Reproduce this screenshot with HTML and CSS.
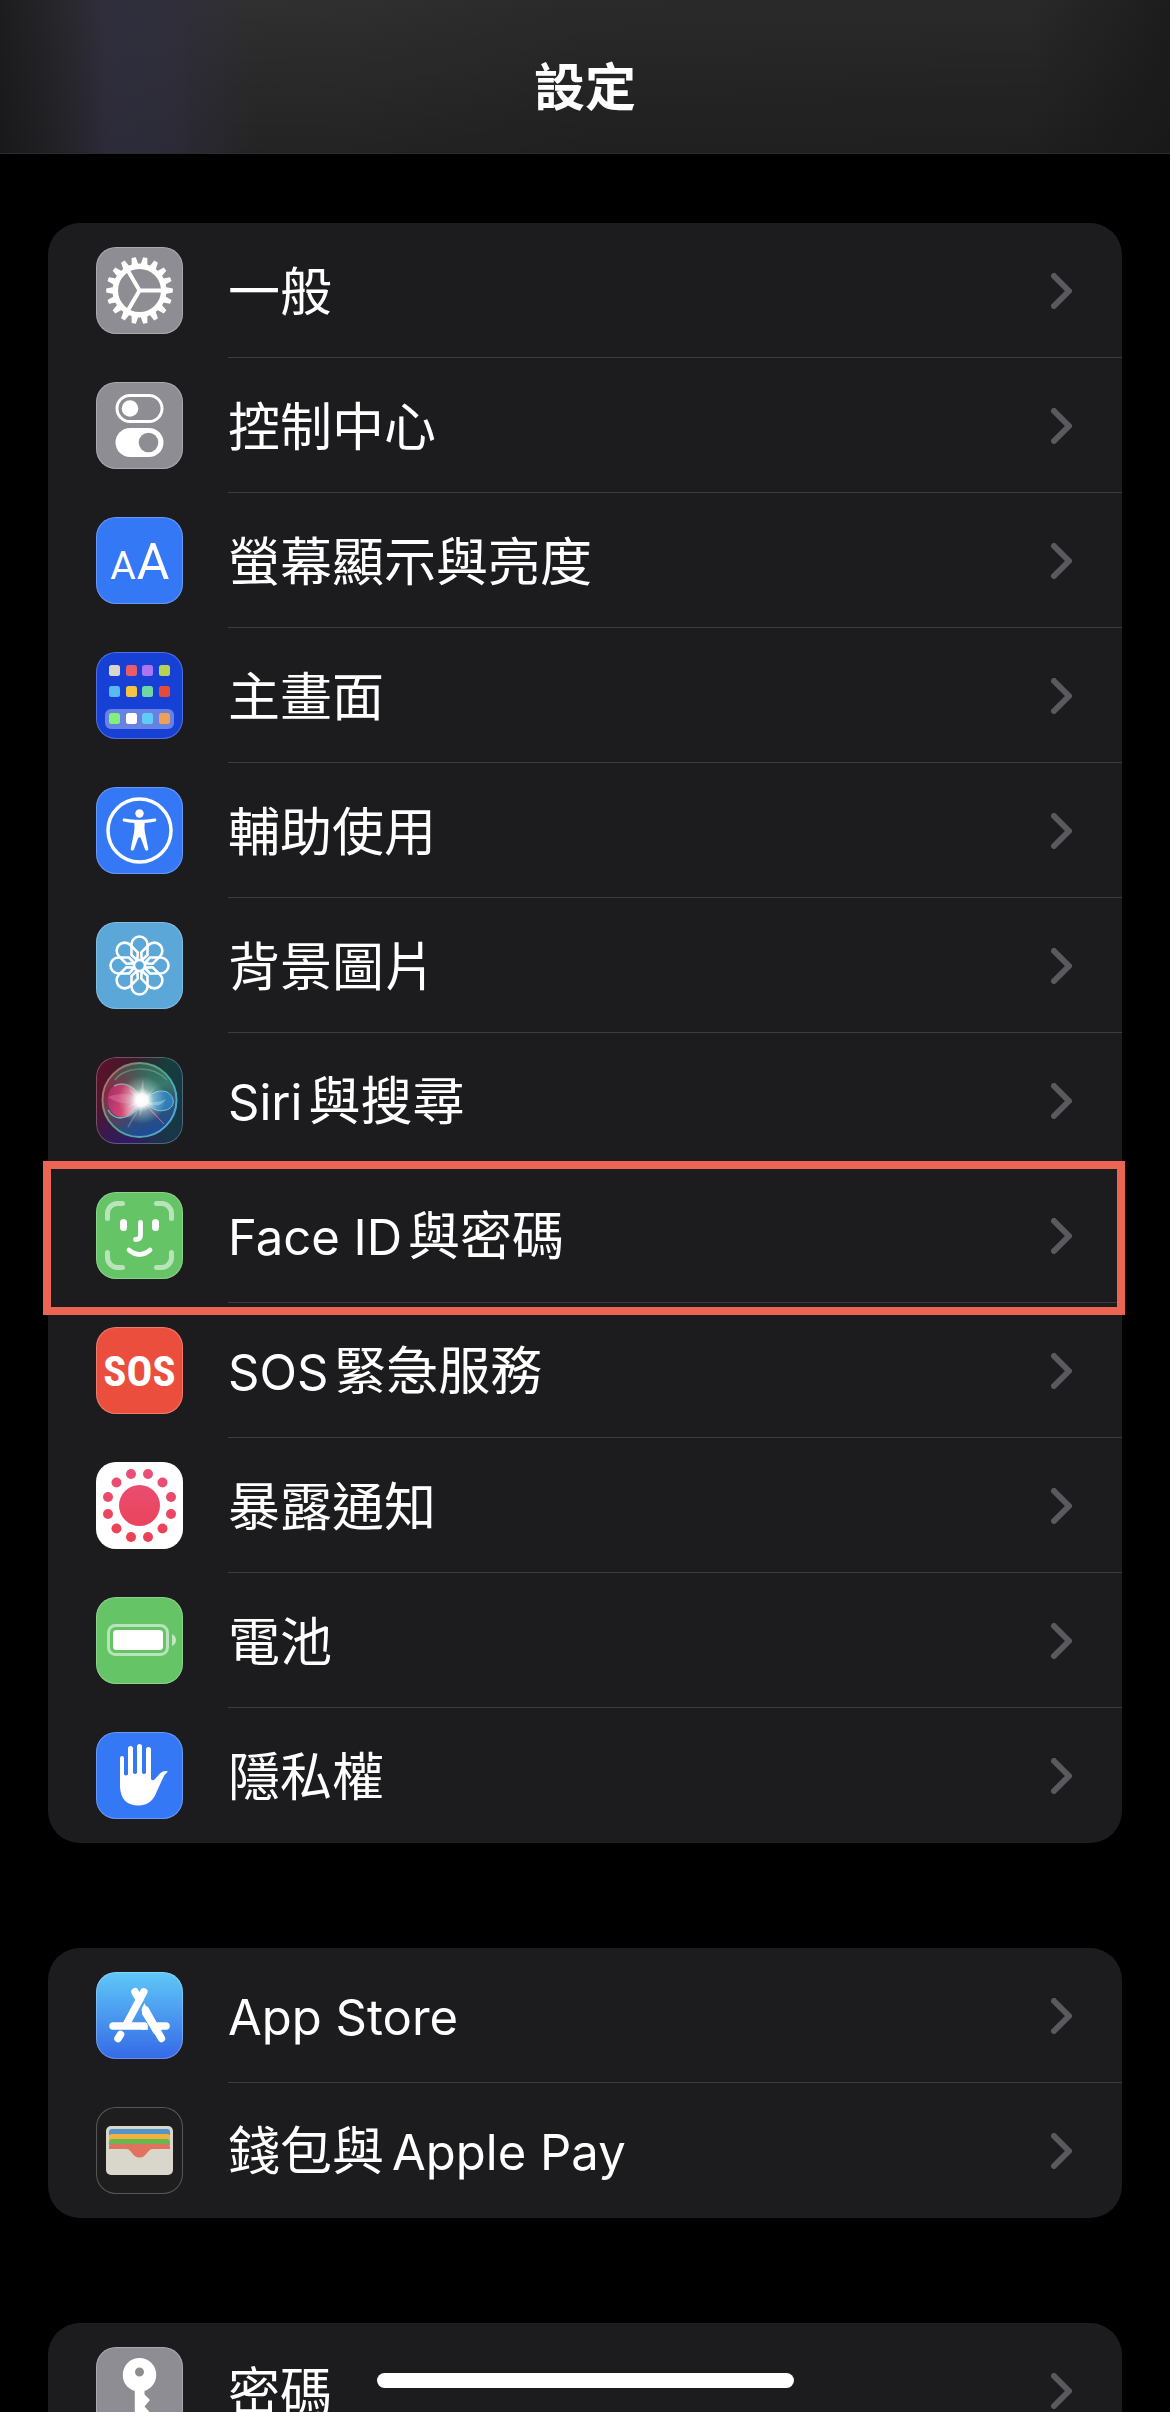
FILE: index.html
```html
<!DOCTYPE html>
<html lang="zh-Hant">
<head>
    <meta charset="UTF-8">
    <meta name="viewport" content="width=device-width, initial-scale=1">
    <title>設定</title>
    <link rel="stylesheet" href="styles.css">
</head>

<body>

    <header class="top-bar">
        <h1>設定</h1>
    </header>

    <main class="settings">

        <ul class="group">
            <li class="row">
                <a href="#general">
                    <svg class="icon gray" viewBox="0 0 87 87" aria-hidden="true">
                        <defs>
                            <path id="teeth" d="M10.2 41.4L19 39.8v7.400l-8.800-1.600zM76.800 41.400L68 39.800v7.400l8.800-1.600z" fill="#fff"/>
                        </defs>
                        <use href="#teeth"/>
                        <use href="#teeth" transform="rotate(20 43.5 43.5)"/>
                        <use href="#teeth" transform="rotate(40 43.5 43.5)"/>
                        <use href="#teeth" transform="rotate(60 43.5 43.5)"/>
                        <use href="#teeth" transform="rotate(80 43.5 43.5)"/>
                        <use href="#teeth" transform="rotate(100 43.5 43.5)"/>
                        <use href="#teeth" transform="rotate(120 43.5 43.5)"/>
                        <use href="#teeth" transform="rotate(140 43.5 43.5)"/>
                        <use href="#teeth" transform="rotate(160 43.5 43.5)"/>
                        <circle cx="43.5" cy="43.5" r="24.2" fill="none" stroke="#fff" stroke-width="5.5"/>
                        <path d="M68 43.5H43.5M31 22l12.5 21.5L31 65" fill="none" stroke="#fff" stroke-width="4"/>
                    </svg>
                    <span class="label">一般</span>
                    <svg class="chevron" viewBox="0 0 21 36" aria-hidden="true"><path d="M3 3l15 15L3 33"/></svg>
                </a>
            </li>
            <li class="row">
                <a href="#control-center">
                    <svg class="icon gray" viewBox="0 0 87 87" aria-hidden="true">
                        <rect x="21" y="13.5" width="45" height="26" rx="13" fill="none" stroke="#fff" stroke-width="3"/>
                        <circle cx="34" cy="26.5" r="8.3" fill="#fff"/>
                        <rect x="19.5" y="46" width="48" height="29" rx="14.5" fill="#fff"/>
                        <circle cx="52.5" cy="60.5" r="9.8" fill="#8e8d93"/>
                    </svg>
                    <span class="label">控制中心</span>
                    <svg class="chevron" viewBox="0 0 21 36" aria-hidden="true"><path d="M3 3l15 15L3 33"/></svg>
                </a>
            </li>
            <li class="row">
                <a href="#display">
                    <svg class="icon blue" viewBox="0 0 87 87" aria-hidden="true">
                        <text class="aa" x="27" y="62" font-size="39">A</text>
                        <text class="aa" x="57" y="62" font-size="50">A</text>
                    </svg>
                    <span class="label">螢幕顯示與亮度</span>
                    <svg class="chevron" viewBox="0 0 21 36" aria-hidden="true"><path d="M3 3l15 15L3 33"/></svg>
                </a>
            </li>
            <li class="row">
                <a href="#home-screen">
                    <svg class="icon navy" viewBox="0 0 87 87" aria-hidden="true">
                        <rect x="9" y="57" width="69" height="20" rx="6" fill="#fff" fill-opacity=".35"/>
                        <rect x="13" y="13" width="11" height="11" rx="2.5" fill="#d8d6cf"/>
                        <rect x="30" y="13" width="11" height="11" rx="2.5" fill="#ea5c68"/>
                        <rect x="46" y="13" width="11" height="11" rx="2.5" fill="#ab74f3"/>
                        <rect x="63" y="13" width="11" height="11" rx="2.5" fill="#b9d154"/>
                        <rect x="13" y="34" width="11" height="11" rx="2.5" fill="#58b9f5"/>
                        <rect x="30" y="34" width="11" height="11" rx="2.5" fill="#f6c343"/>
                        <rect x="46" y="34" width="11" height="11" rx="2.5" fill="#71d6a6"/>
                        <rect x="63" y="34" width="11" height="11" rx="2.5" fill="#e64b37"/>
                        <rect x="13" y="61" width="11" height="11" rx="2.5" fill="#83ef7d"/>
                        <rect x="30" y="61" width="11" height="11" rx="2.5" fill="#fff"/>
                        <rect x="46" y="61" width="11" height="11" rx="2.5" fill="#61cbf8"/>
                        <rect x="63" y="61" width="11" height="11" rx="2.5" fill="#efa057"/>
                    </svg>
                    <span class="label">主畫面</span>
                    <svg class="chevron" viewBox="0 0 21 36" aria-hidden="true"><path d="M3 3l15 15L3 33"/></svg>
                </a>
            </li>
            <li class="row">
                <a href="#accessibility">
                    <svg class="icon blue" viewBox="0 0 87 87" aria-hidden="true">
                        <circle cx="43.5" cy="43.5" r="31.5" fill="none" stroke="#fff" stroke-width="3.5"/>
                        <circle cx="43.5" cy="26.5" r="4.2" fill="#fff"/>
                        <path d="M28.2 31.5c5 1 10 1.3 15.3 1.3s10.300-.3 15.300-1.300c1.800-.3 2.200 2.500.4 2.900-3.600.9-7 1.300-10.400 1.700-.6 3.500-.3 7.500.5 11l2.900 14.500c.4 2.200-2.400 3-3.200 1L45 51.500c-.6-1.700-2.400-1.700-3 0l-4 11.100c-.8 2-3.600 1.200-3.200-1l2.900-14.500c.8-3.500 1.100-7.500.5-11-3.400-.4-6.800-.8-10.400-1.700-1.800-.4-1.400-3.200.4-2.900z" fill="#fff"/>
                    </svg>
                    <span class="label">輔助使用</span>
                    <svg class="chevron" viewBox="0 0 21 36" aria-hidden="true"><path d="M3 3l15 15L3 33"/></svg>
                </a>
            </li>
            <li class="row">
                <a href="#wallpaper">
                    <svg class="icon sky" viewBox="0 0 87 87" aria-hidden="true">
                        <defs>
                            <path id="petal" d="M41.5 38.5L35.500 33V22.500a8 8 0 0 1 16 0V33l-6 5.500" fill="none" stroke="#fff" stroke-width="2.6"/>
                        </defs>
                        <use href="#petal"/>
                        <use href="#petal" transform="rotate(45 43.5 43.5)"/>
                        <use href="#petal" transform="rotate(90 43.5 43.5)"/>
                        <use href="#petal" transform="rotate(135 43.5 43.5)"/>
                        <use href="#petal" transform="rotate(180 43.5 43.5)"/>
                        <use href="#petal" transform="rotate(225 43.5 43.5)"/>
                        <use href="#petal" transform="rotate(270 43.5 43.5)"/>
                        <use href="#petal" transform="rotate(315 43.5 43.5)"/>
                        <circle cx="43.5" cy="43.5" r="5.5" fill="none" stroke="#fff" stroke-width="2.6"/>
                    </svg>
                    <span class="label">背景圖片</span>
                    <svg class="chevron" viewBox="0 0 21 36" aria-hidden="true"><path d="M3 3l15 15L3 33"/></svg>
                </a>
            </li>
            <li class="row">
                <a href="#siri">
                    <svg class="icon siri" viewBox="0 0 87 87" aria-hidden="true">
                        <defs>
                            <linearGradient id="orb" x1="0.3" y1="0" x2="0.6" y2="1">
                                <stop offset="0" stop-color="#38594d"/>
                                <stop offset=".4" stop-color="#37796a"/>
                                <stop offset=".65" stop-color="#31516f"/>
                                <stop offset="1" stop-color="#1d4a9c"/>
                            </linearGradient>
                            <linearGradient id="rim" x1="0" y1="0" x2="1" y2="0.6">
                                <stop offset="0" stop-color="#c0606c"/>
                                <stop offset=".5" stop-color="#55a67e"/>
                                <stop offset="1" stop-color="#4fa8cf"/>
                            </linearGradient>
                            <linearGradient id="lobe" x1="0" y1="0" x2="1" y2="0.3">
                                <stop offset="0" stop-color="#a02c68"/>
                                <stop offset=".6" stop-color="#d4466f"/>
                                <stop offset="1" stop-color="#f6b9cf"/>
                            </linearGradient>
                            <radialGradient id="redside" cx="0.05" cy="0.4" r="0.6">
                                <stop offset="0" stop-color="#8c2542"/>
                                <stop offset="1" stop-color="#8c2542" stop-opacity="0"/>
                            </radialGradient>
                            <radialGradient id="glow">
                                <stop offset="0" stop-color="#fff"/>
                                <stop offset=".25" stop-color="#fff" stop-opacity=".95"/>
                                <stop offset=".5" stop-color="#d6f4ee" stop-opacity=".45"/>
                                <stop offset="1" stop-color="#bfe8e0" stop-opacity="0"/>
                            </radialGradient>
                        </defs>
                        <circle cx="43.5" cy="43" r="37" fill="url(#orb)"/>
                        <circle cx="43.5" cy="43" r="37" fill="url(#redside)"/>
                        <circle cx="43.5" cy="43" r="37" fill="none" stroke="url(#rim)" stroke-width="2"/>
                        <path d="M19 23c8-12 36-17 52 0" fill="none" stroke="#6cc0a0" stroke-opacity=".5" stroke-width="1.5"/>
                        <path d="M47 44C39 29 27 25 18 29 9 34 10 53 19 58c10 6 20-3 28-14z" fill="url(#lobe)"/>
                        <path d="M47 44C39 38 27 34 12 40c8 6 20 9 35 4z" fill="#f38bb0" fill-opacity=".35"/>
                        <path d="M12 53c8 14 26 8 35-9" fill="none" stroke="#74cfd6" stroke-opacity=".8" stroke-width="1.5"/>
                        <path d="M18 29c10-5 21 0 29 15" fill="none" stroke="#9fd8d6" stroke-opacity=".6" stroke-width="1.5"/>
                        <path d="M47 44c8-8 16-12 24-9 9 5 8 16-1 18-9 3-16-3-23-9z" fill="#348bcb" fill-opacity=".75" stroke="#66c7e5" stroke-width="1"/>
                        <path d="M48 44c7 2 14 2 22-2-4 7-12 9-22 2z" fill="#8edcf2" fill-opacity=".5"/>
                        <path d="M48 45l20 22-12-12z" fill="#dd6b9b" fill-opacity=".7" stroke="#dd6b9b" stroke-opacity=".5" stroke-width="1"/>
                        <path d="M46 46L32 70" stroke="#79b6e8" stroke-opacity=".4" stroke-width="1.5"/>
                        <circle cx="46" cy="43" r="24" fill="url(#glow)"/>
                        <path d="M47 22l2 18 10-10-8 12 9 9-12-5-4 14-1-14-12 5 10-8-9-13 11 10z" fill="#fff" fill-opacity=".25"/>
                    </svg>
                    <span class="label"><span class="latin">Siri</span>與搜尋</span>
                    <svg class="chevron" viewBox="0 0 21 36" aria-hidden="true"><path d="M3 3l15 15L3 33"/></svg>
                </a>
            </li>
            <li class="row marked">
                <a href="#face-id">
                    <svg class="icon green" viewBox="0 0 87 87" aria-hidden="true">
                        <path d="M11.5 26.5v-5a10 10 0 0 1 10-10h5M60.5 11.5h5a10 10 0 0 1 10 10v5M75.5 60.5v5a10 10 0 0 1-10 10h-5M26.5 75.5h-5a10 10 0 0 1-10-10v-5" fill="none" stroke="#fff" stroke-opacity=".55" stroke-width="5" stroke-linecap="round"/>
                        <rect x="24" y="27" width="7" height="12" rx="3.5" fill="#fff"/>
                        <rect x="56" y="27" width="7" height="12" rx="3.5" fill="#fff"/>
                        <path d="M44.5 30.5v13q0 4-5 4M33 58q10.5 9 21 0" fill="none" stroke="#fff" stroke-width="4.8" stroke-linecap="round"/>
                    </svg>
                    <span class="label"><span class="latin">Face ID</span>與密碼</span>
                    <svg class="chevron" viewBox="0 0 21 36" aria-hidden="true"><path d="M3 3l15 15L3 33"/></svg>
                </a>
            </li>
            <li class="row">
                <a href="#sos">
                    <svg class="icon red" viewBox="0 0 87 87" aria-hidden="true">
                        <text class="sos" x="43.5" y="59">SOS</text>
                    </svg>
                    <span class="label"><span class="latin">SOS</span>緊急服務</span>
                    <svg class="chevron" viewBox="0 0 21 36" aria-hidden="true"><path d="M3 3l15 15L3 33"/></svg>
                </a>
            </li>
            <li class="row">
                <a href="#exposure">
                    <svg class="icon white" viewBox="0 0 87 87" aria-hidden="true">
                        <defs>
                            <linearGradient id="pink" gradientUnits="userSpaceOnUse" x1="0" y1="7" x2="0" y2="80">
                                <stop offset="0" stop-color="#ea5079"/>
                                <stop offset="1" stop-color="#eb4053"/>
                            </linearGradient>
                        </defs>
                        <g fill="url(#pink)">
                            <circle cx="43.5" cy="43.5" r="20.5"/>
                            <circle cx="35" cy="12" r="5"/>
                            <circle cx="52" cy="12" r="5"/>
                            <circle cx="20.5" cy="20.5" r="5"/>
                            <circle cx="66.5" cy="20.5" r="5"/>
                            <circle cx="12" cy="35" r="5"/>
                            <circle cx="75" cy="35" r="5"/>
                            <circle cx="12" cy="52" r="5"/>
                            <circle cx="75" cy="52" r="5"/>
                            <circle cx="20.5" cy="66.5" r="5"/>
                            <circle cx="66.5" cy="66.5" r="5"/>
                            <circle cx="35" cy="75" r="5"/>
                            <circle cx="52" cy="75" r="5"/>
                        </g>
                    </svg>
                    <span class="label">暴露通知</span>
                    <svg class="chevron" viewBox="0 0 21 36" aria-hidden="true"><path d="M3 3l15 15L3 33"/></svg>
                </a>
            </li>
            <li class="row">
                <a href="#battery">
                    <svg class="icon green" viewBox="0 0 87 87" aria-hidden="true">
                        <rect x="12.5" y="28.5" width="59" height="29" rx="7" fill="none" stroke="#fff" stroke-opacity=".55" stroke-width="3"/>
                        <path d="M76 37q4 2 4 6t-4 6z" fill="#fff" fill-opacity=".6"/>
                        <rect x="17" y="33" width="50" height="20" rx="3.5" fill="#fff"/>
                    </svg>
                    <span class="label">電池</span>
                    <svg class="chevron" viewBox="0 0 21 36" aria-hidden="true"><path d="M3 3l15 15L3 33"/></svg>
                </a>
            </li>
            <li class="row">
                <a href="#privacy">
                    <svg class="icon blue" viewBox="0 0 87 87" aria-hidden="true">
                        <path d="M24 26a2 2 0 0 1 4 0v16.5q2 2 4 0V16.5a2.5 2.5 0 0 1 5 0V41q2 2 4 0V14.5a2.5 2.5 0 0 1 5 0V41q2 2 4 0V17.5a2.5 2.5 0 0 1 5 0V47q1.5 2.5 4 0l5-5.5q4-3.5 8-2-4 3-5.5 7.5L61 59q-5 14.5-18.5 14.5Q25 73.5 24 55z" fill="#fff"/>
                    </svg>
                    <span class="label">隱私權</span>
                    <svg class="chevron" viewBox="0 0 21 36" aria-hidden="true"><path d="M3 3l15 15L3 33"/></svg>
                </a>
            </li>
        </ul>

        <ul class="group">
            <li class="row">
                <a href="#app-store">
                    <svg class="icon store" viewBox="0 0 87 87" aria-hidden="true">
                        <g fill="none" stroke="#fff" stroke-width="7.5" stroke-linecap="round">
                            <path d="M47.8 19.8L30 53"/>
                            <path d="M39 19.8l4.5 8M49.5 38l16 28.5"/>
                            <path d="M24.5 62.5L22 66.5"/>
                            <path d="M17 54h31M62 54h8"/>
                        </g>
                        <path d="M48.5 31l-2.5 5v6l12 20h5zM48 50.2q4 2 4 7.6h-6z" fill="#fff"/>
                    </svg>
                    <span class="label"><span class="latin">App Store</span></span>
                    <svg class="chevron" viewBox="0 0 21 36" aria-hidden="true"><path d="M3 3l15 15L3 33"/></svg>
                </a>
            </li>
            <li class="row">
                <a href="#wallet">
                    <svg class="icon wallet" viewBox="0 0 87 87" aria-hidden="true">
                        <rect x="10" y="19" width="67" height="49" rx="5" fill="#d9d6cc"/>
                        <path d="M13 28v-3q0-3 3-3h55q3 0 3 3v3z" fill="#5495c7"/>
                        <path d="M13 33v-3q0-3 3-3h55q3 0 3 3v3z" fill="#f3b13d"/>
                        <path d="M13 38v-3q0-3 3-3h55q3 0 3 3v3z" fill="#6ab750"/>
                        <path d="M13 42v-2q0-3 3-3h55q3 0 3 3v2H57c-6 0-6 8.5-13.5 8.5S36 42 30 42z" fill="#e27260"/>
                    </svg>
                    <span class="label">錢包與<span class="latin after-cjk">Apple Pay</span></span>
                    <svg class="chevron" viewBox="0 0 21 36" aria-hidden="true"><path d="M3 3l15 15L3 33"/></svg>
                </a>
            </li>
        </ul>

        <ul class="group">
            <li class="row">
                <a href="#passwords">
                    <svg class="icon gray" viewBox="0 0 87 87" aria-hidden="true">
                        <path fill-rule="evenodd" d="M43.5 11a16.700 16.700 0 0 1 16.700 17c0 8-5 13.500-11.700 16v3.500l5.500 5.500-5.500 6.500 5.500 6-5.500 5.500V75l-5 5-4.700-5V44C31.500 41.500 26.800 36 26.800 28a16.700 16.700 0 0 1 16.700-17zm0 9.500a4.500 4.500 0 1 0 0 9 4.500 4.500 0 0 0 0-9z" fill="#fff"/>
                    </svg>
                    <span class="label">密碼</span>
                    <svg class="chevron" viewBox="0 0 21 36" aria-hidden="true"><path d="M3 3l15 15L3 33"/></svg>
                </a>
            </li>
        </ul>

    </main>

    <!-- Home indicator -->
    <div class="home-bar"></div>

</body>
</html>
```

FILE: styles.css
```css
* {
    box-sizing: border-box;
}
body {
    margin: 0;
    height: 100vh;
    display: flex;
    flex-direction: column;
    overflow: hidden;
    background-color: #000;
    color: #fff;
    font-family: Inter, "Noto Sans CJK TC", sans-serif;
}
.top-bar {
    flex: none;
    padding: 50px 0 27px;
    border-bottom: 1px solid #2b2b2c;
    text-align: center;
    background-image:
        linear-gradient(to right, rgba(20, 20, 22, 0.7), rgba(20, 20, 22, 0) 9%, rgba(20, 20, 22, 0) 88%, rgba(20, 20, 22, 0.6)),
        linear-gradient(to right, rgba(48, 46, 72, 0), rgba(48, 46, 66, 0.7) 10%, rgba(48, 46, 66, 0.6) 15%, rgba(48, 46, 66, 0) 22%),
        linear-gradient(to bottom, rgba(0, 0, 0, 0), rgba(0, 0, 0, 0.25)),
        linear-gradient(to right, #303030, #2f2f2f 30%, #2a2a2a 50%, #292929);
}
.top-bar h1 {
    margin: 0;
    font-size: 51px;
    line-height: 76px;
    font-weight: 700;
}
.settings {
    flex: 1;
    min-height: 0;
    overflow-y: auto;
    scrollbar-width: none;
    padding: 69px 48px;
}
.group {
    list-style-type: none;
    margin: 0 0 105px;
    padding: 0;
    background-color: #1c1c1e;
    border-radius: 32px;
}
.row a {
    display: flex;
    align-items: center;
    gap: 45px;
    padding-left: 48px;
    color: inherit;
    text-decoration: none;
}
.icon {
    flex: none;
    width: 87px;
    height: 87px;
    margin: 24px 0;
    border-radius: 20px;
    box-shadow: inset 0 0 0 1px rgba(255, 255, 255, 0.25);
}
.label {
    flex: 1;
    padding-top: 4px;
    font-size: 52px;
    line-height: 76px;
    font-weight: 400;
    white-space: nowrap;
}
/* Inter runs wider than the Chinese glyphs */
.latin {
    margin-right: 6px;
    font-size: 49px;
}
.after-cjk {
    margin: 0 0 0 8px;
}
.chevron {
    flex: none;
    width: 21px;
    height: 36px;
    margin-right: 50px;
    fill: none;
    stroke: #5a5a5e;
    stroke-width: 6px;
    stroke-linecap: round;
    stroke-linejoin: round;
}

/* Separator starts under the label */
.row {
    position: relative;
}
.row:not(:last-child)::after {
    content: "";
    position: absolute;
    left: 180px;
    right: 0;
    bottom: 0;
    height: 1px;
    background-color: #3d3d41;
}

/* Red frame around the highlighted row */
.marked::before {
    content: "";
    position: absolute;
    z-index: 1;
    inset: -7px -3px -12px -5px;
    border: 8px solid #ec6453;
    pointer-events: none;
}

.gray {
    background-color: #8e8d93;
}
.blue {
    background-color: #3478f6;
}
.navy {
    background-color: #1740d5;
}
.sky {
    background-color: #5aa7d8;
}
.green {
    background-color: #65c466;
}
.red {
    background-color: #eb4e3d;
}
.white {
    background-color: #fff;
}
.siri {
    background-image:
        radial-gradient(circle at 35% 100%, #2e1c66, rgba(46, 28, 102, 0) 50%),
        linear-gradient(100deg, #5f1129, #3a1b2c 40%, #173f3c 70%, #15344a);
}
.store {
    background-image: linear-gradient(to bottom, #5fc8f8, #3569e6);
}
.wallet {
    background-color: #1e1e1e;
}
.aa {
    fill: #fff;
    font-family: Roboto, sans-serif;
    font-weight: 400;
    text-anchor: middle;
}
.sos {
    fill: #fff;
    font-family: "Roboto Condensed", "Liberation Sans Narrow", Roboto, sans-serif;
    font-size: 43px;
    font-weight: 700;
    text-anchor: middle;
}

.home-bar {
    position: fixed;
    left: 50%;
    bottom: 24px;
    width: 417px;
    height: 15px;
    margin-left: -208px;
    border-radius: 8px;
    background-color: #fff;
}
```
